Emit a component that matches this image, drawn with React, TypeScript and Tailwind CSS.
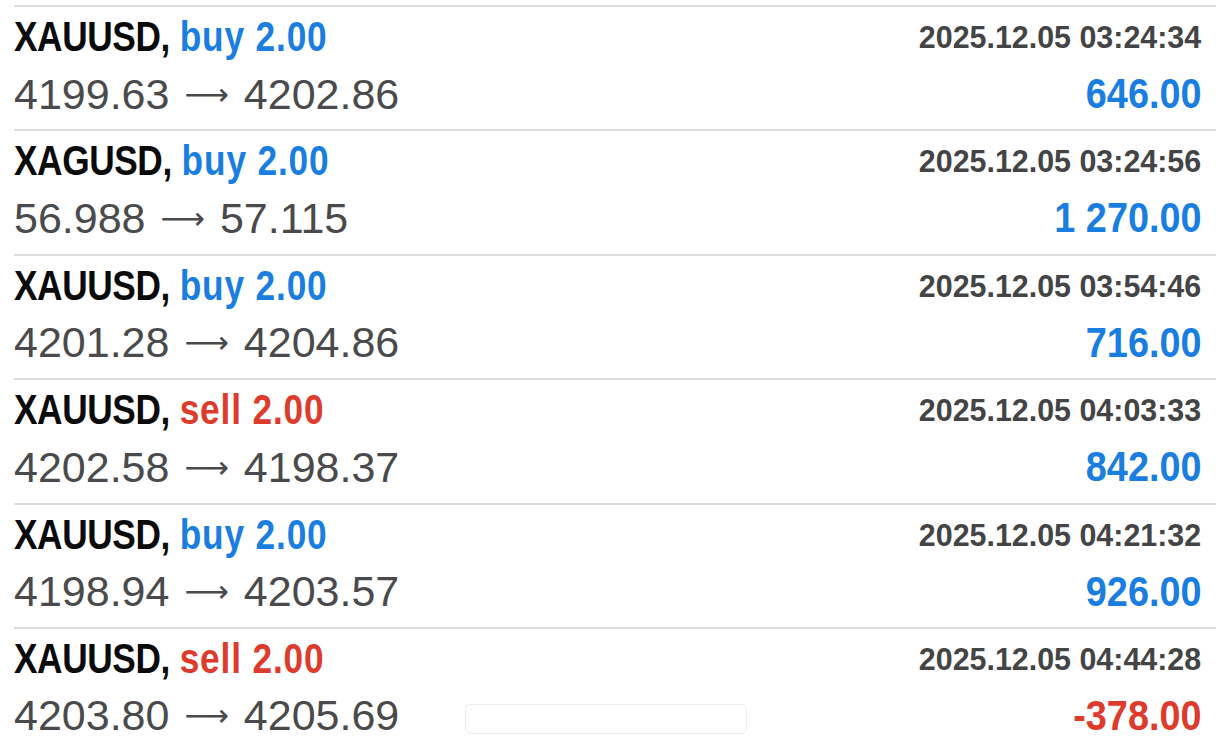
const trades = [
  { sym: 'XAUUSD', side: 'buy', lots: '2.00', open: '4199.63', close: '4202.86', time: '2025.12.05 03:24:34', profit: '646.00' },
  { sym: 'XAGUSD', side: 'buy', lots: '2.00', open: '56.988', close: '57.115', time: '2025.12.05 03:24:56', profit: '1 270.00' },
  { sym: 'XAUUSD', side: 'buy', lots: '2.00', open: '4201.28', close: '4204.86', time: '2025.12.05 03:54:46', profit: '716.00' },
  { sym: 'XAUUSD', side: 'sell', lots: '2.00', open: '4202.58', close: '4198.37', time: '2025.12.05 04:03:33', profit: '842.00' },
  { sym: 'XAUUSD', side: 'buy', lots: '2.00', open: '4198.94', close: '4203.57', time: '2025.12.05 04:21:32', profit: '926.00' },
  { sym: 'XAUUSD', side: 'sell', lots: '2.00', open: '4203.80', close: '4205.69', time: '2025.12.05 04:44:28', profit: '-378.00' },
];

// condensed look: Liberation Sans bold squeezed horizontally
const bold = "font-['Liberation_Sans',Arial,sans-serif] font-bold inline-block whitespace-nowrap";

export default function App() {
  return (
    <div className="w-[1216px] h-[749px] overflow-hidden bg-white pt-[5px]">
      {trades.map((t, i) => {
        const loss = t.profit.startsWith('-');
        return (
          <div key={i} className="ml-[14px] border-t-2 border-[#dcdcdc] h-[124.4px] pr-[15px] pt-[2px]">
            <div className="flex items-center justify-between h-[56px]">
              <div className={`${bold} text-[42px] leading-none text-[#0a0a0a] scale-x-[0.84] origin-left`}>
                <span className="tracking-[-0.5px]">{t.sym},</span>{' '}
                <span className={`tracking-[1px] ${t.side === 'buy' ? 'text-[#1a7ee0]' : 'text-[#dd3b2c]'}`}>
                  {t.side} {t.lots}
                </span>
              </div>
              <div className={`${bold} text-[32px] leading-none text-[#444446] scale-x-[0.95] origin-right`}>{t.time}</div>
            </div>
            <div className="flex items-center justify-between h-[58px]">
              <div className="font-['Liberation_Sans',Arial,sans-serif] text-[43px] leading-none text-[#4a4a4c] whitespace-nowrap">
                {t.open}{' '}
                <span className="font-['DejaVu_Sans',sans-serif] text-[31px] align-[4px] mx-[3px]">⟶</span>{' '}
                {t.close}
              </div>
              {i === trades.length - 1 && (
                <div className="ml-[66px] mr-auto mt-[6px] w-[282px] h-[30px] rounded-[6px] border border-[#ececec] bg-white" />
              )}
              <div className={`${bold} text-[42px] leading-none scale-x-[0.9] origin-right ${loss ? 'text-[#dd3b2c]' : 'text-[#1a7ee0]'}`}>
                {t.profit}
              </div>
            </div>
          </div>
        );
      })}
    </div>
  );
}
